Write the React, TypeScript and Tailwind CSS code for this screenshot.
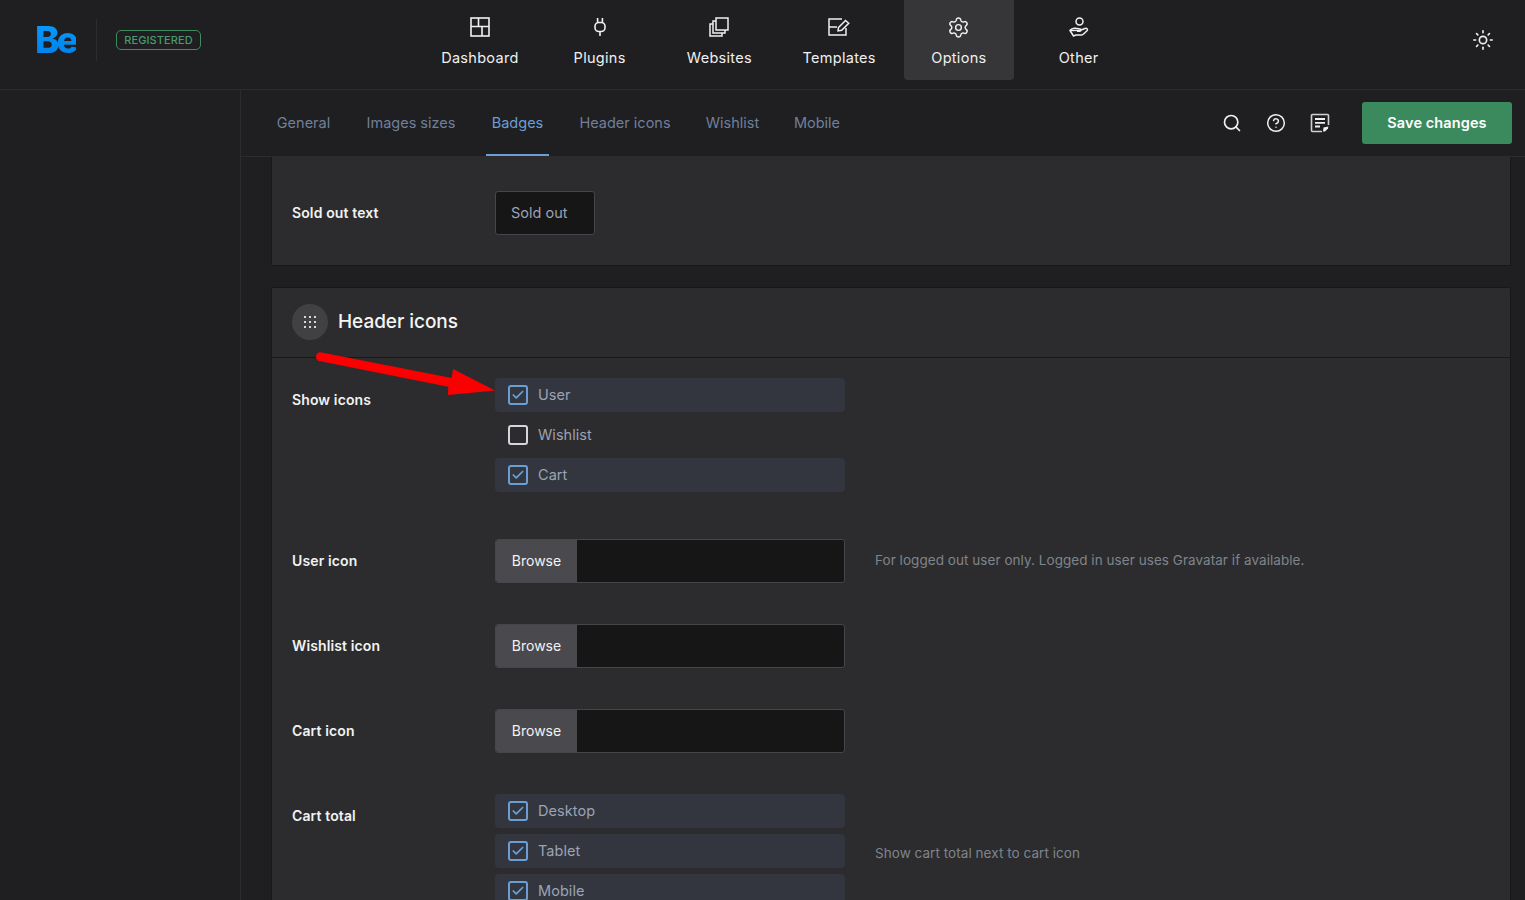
import { Search, CircleHelp, Sun, Settings, Check } from "lucide-react";

const font = { fontFamily: "Inter, 'Liberation Sans', sans-serif" };

const DashboardIcon = () => (
  <svg width="22" height="22" viewBox="0 0 22 22" fill="none" stroke="currentColor" strokeWidth="1.6">
    <rect x="2" y="2" width="18" height="18" />
    <path d="M2 10.5h18M9.5 2v8.5M13 10.5V20" />
  </svg>
);

const PluginIcon = () => (
  <svg width="22" height="22" viewBox="0 0 22 22" fill="none" stroke="currentColor" strokeWidth="1.6">
    <path d="M8.6 2v4.5M13.4 2v4.5M11 15.5V20" />
    <rect x="6" y="6.5" width="10" height="9" rx="3.8" />
  </svg>
);

const WebsitesIcon = () => (
  <svg width="22" height="22" viewBox="0 0 22 22" fill="none" stroke="currentColor" strokeWidth="1.5">
    <rect x="8" y="2" width="12" height="12" />
    <path d="M8 5H5v12h12v-3" />
    <path d="M5 8H2v12h12v-3" />
  </svg>
);

const TemplatesIcon = () => (
  <svg width="22" height="22" viewBox="0 0 22 22" fill="none" stroke="currentColor" strokeWidth="1.5">
    <path d="M14 3H1v16h17v-7" />
    <path d="M1 11h8" />
    <path d="M10.5 11.5l7-7 3.200 2.800-7 7-3.700.6z" fill="#1f1f21" />
  </svg>
);

const OtherIcon = () => (
  <svg width="22" height="22" viewBox="0 0 22 22" fill="none" stroke="currentColor" strokeWidth="1.5" strokeLinejoin="round">
    <circle cx="11.5" cy="5.5" r="3.5" />
    <path d="M2 14.500c1.500-2 3.500-2.500 5.500-2.200l4.500.7c1.300.2 1.300 2.200-.2 2.200H9" />
    <path d="M12.300 14.200l4.700-1.700c2-.7 3.200 1 2 2.200l-3.500 3.300c-1 .9-2 1.200-3.500 1H8l-2.500 1L2 14.500z" />
  </svg>
);

const NotesIcon = () => (
  <svg width="20" height="20" viewBox="0 0 20 20" fill="none" stroke="currentColor" strokeWidth="1.6" strokeLinejoin="round">
    <path d="M12 18.500H2.500a1 1 0 0 1-1-1v-15a1 1 0 0 1 1-1h15a1 1 0 0 1 1 1V12" opacity="0.85" />
    <path d="M5 6h10M5 9.800h10M5 13.500h5" strokeWidth="1.800" />
    <path d="M13 18.500l.5-4 4.800-1-.3 2-3 3z" fill="currentColor" stroke="none" />
  </svg>
);

const navItems = [
  { label: "Dashboard", icon: <DashboardIcon /> },
  { label: "Plugins", icon: <PluginIcon /> },
  { label: "Websites", icon: <WebsitesIcon /> },
  { label: "Templates", icon: <TemplatesIcon /> },
  { label: "Options", icon: <Settings size={23} strokeWidth={1.5} />, active: true },
  { label: "Other", icon: <OtherIcon /> },
];

const tabs = [
  { label: "General", width: "w-[65px]" },
  { label: "Images sizes", width: "w-[100px]" },
  { label: "Badges", width: "w-[63px]" },
  { label: "Header icons", width: "w-[102px]" },
  { label: "Wishlist", width: "w-[63px]" },
  { label: "Mobile", width: "w-[56px]" },
];

const CheckRow = ({ label, checked }: { label: string; checked: boolean }) => (
  <div className={`h-[34px] mb-[6px] rounded-[4px] flex items-center pl-[13px] gap-[10px] ${checked ? "bg-[#33363f]" : ""}`}>
    <span className={`w-[20px] h-[20px] rounded-[3px] border-2 flex items-center justify-center ${checked ? "border-[#6a9fd6]" : "border-[#d3d6dc]"}`}>
      {checked && <Check size={14} strokeWidth={3} className="text-[#6a9fd6]" />}
    </span>
    <span className="text-[14.5px] tracking-[0.05px] text-[#9ba3b5]">{label}</span>
  </div>
);

const Row = ({ label, hint, children }: { label: string; hint?: string; children: React.ReactNode }) => (
  <div className="flex items-center pt-[20px] pb-[21px] pl-[20px]">
    <div className="w-[203px] h-[44px] pb-[2px] self-start flex items-center text-[14px] tracking-[0.12px] font-semibold text-[#f2f2f2]">{label}</div>
    <div className="w-[350px]">{children}</div>
    {hint && <div className="ml-[30px] pb-[2px] text-[13.5px] tracking-[0.05px] text-[#7f848c]">{hint}</div>}
  </div>
);

const BrowseInput = () => (
  <div className="h-[44px] flex rounded-[3px] border border-[#46464a] bg-[#161616] overflow-hidden">
    <div className="w-[81px] pb-[2px] bg-[#4a494e] flex items-center justify-center text-[14px] text-[#f2f2f2]">Browse</div>
  </div>
);

export default function App() {
  return (
    <div style={font} className="relative w-[1525px] h-[900px] overflow-hidden bg-[#1f1f21] text-white">
      <header className="h-[90px] border-b border-[#2c2c2e] flex">
        <div className="w-[425px] flex items-start">
          <div className="w-[97px] h-[42px] mt-[19px] pb-[2px] border-r border-[#2c2c2e] flex items-center pl-[35px]">
            <span className="text-[37px] leading-none font-extrabold tracking-[-3px] bg-gradient-to-b from-[#0a9bff] to-[#0080e8] bg-clip-text text-transparent">Be</span>
          </div>
          <div className="ml-[19px] mt-[30px] pt-[1px] h-[20px] w-[85px] rounded-[5px] border border-[#3f8a5f] flex items-center justify-center text-[11px] tracking-[0.1px] font-medium text-[#4a9a6d]">REGISTERED</div>
        </div>
        <nav className="flex gap-[10px]">
          {navItems.map((item) => (
            <div
              key={item.label}
              className={`w-[109.75px] h-[80px] rounded-b-[4px] flex flex-col items-center pt-[16px] text-[#f0f0f0] ${item.active ? "bg-[#363638]" : ""}`}
            >
              <span className="h-[22px] flex items-center">{item.icon}</span>
              <span className="mt-[10px] text-[14.5px] leading-[20px] tracking-[0.3px]">{item.label}</span>
            </div>
          ))}
        </nav>
        <div className="flex-1 flex justify-end pr-[31px] pt-[29px]">
          <Sun size={22} strokeWidth={1.8} className="text-[#f0f0f0]" />
        </div>
      </header>

      <div className="flex h-[810px]">
        <aside className="w-[241px] shrink-0 border-r border-[#2c2c2e]" />
        <main className="flex-1 min-w-0">
          <div className="h-[67px] border-b border-[#2c2c2e] flex pl-[30px] pr-[13px]">
            <div className="flex gap-[25px]">
              {tabs.map((tab) => (
                <div
                  key={tab.label}
                  className={`${tab.width} h-[66px] pt-[2px] flex items-center justify-center whitespace-nowrap text-[14.5px] border-b-2 ${tab.label === "Badges" ? "text-[#6a9fd6] border-[#6a9fd6]" : "text-[#6f7f9c] border-transparent"}`}
                >
                  {tab.label}
                </div>
              ))}
            </div>
            <div className="ml-auto flex items-center">
              <div className="flex items-center gap-[24px] mr-[32px] text-[#f0f0f0]">
                <Search size={20} strokeWidth={2} />
                <CircleHelp size={20} strokeWidth={1.8} />
                <NotesIcon />
              </div>
              <div className="w-[150px] h-[42px] rounded-[3px] bg-[#3a8a5d] flex items-center justify-center text-[14.5px] tracking-[0.1px] font-semibold text-white">Save changes</div>
            </div>
          </div>

          <div className="ml-[30px] mr-[14px]">
            <section className="h-[109px] pt-[14px] bg-[#2c2c2e] border-x border-b border-[#18181a] rounded-b-[2px]">
              <Row label="Sold out text">
                <div className="w-[100px] h-[44px] rounded-[3px] border border-[#46464a] bg-[#161616] flex items-center pl-[15px] text-[14.5px] text-[#9ba3b5]">Sold out</div>
              </Row>
            </section>

            <section className="mt-[21px] bg-[#2c2c2e] border border-[#18181a] rounded-t-[2px]">
              <div className="h-[70px] border-b border-[#18181a] flex items-center pl-[20px] gap-[10px]">
                <div className="w-[36px] h-[36px] mb-[2px] rounded-full bg-[#414143] grid grid-cols-3 gap-[3px] p-[12px]">
                  {Array.from({ length: 9 }).map((_, i) => (
                    <span key={i} className="w-[2px] h-[2px] bg-[#d8d8d8]" />
                  ))}
                </div>
                <h2 className="text-[19px] font-medium tracking-[-0.05px] text-[#f5f5f5]">Header icons</h2>
              </div>

              <Row label="Show icons">
                <CheckRow label="User" checked />
                <CheckRow label="Wishlist" checked={false} />
                <CheckRow label="Cart" checked />
              </Row>
              <Row label="User icon" hint="For logged out user only. Logged in user uses Gravatar if available.">
                <BrowseInput />
              </Row>
              <Row label="Wishlist icon">
                <BrowseInput />
              </Row>
              <Row label="Cart icon">
                <BrowseInput />
              </Row>
              <Row label="Cart total" hint="Show cart total next to cart icon">
                <CheckRow label="Desktop" checked />
                <CheckRow label="Tablet" checked />
                <CheckRow label="Mobile" checked />
              </Row>
            </section>
          </div>
        </main>
      </div>

      {/* annotation arrow on top of the screenshot */}
      <svg className="absolute left-0 top-0 pointer-events-none" width="1525" height="900" fill="none">
        <path d="M320.500 352.200L451.700 378L453 369L495 390.500L448 395L448.300 386.700L320.500 361.200A4.500 4.500 0 0 1 320.500 352.200Z" fill="#fb0000" />
      </svg>
    </div>
  );
}
